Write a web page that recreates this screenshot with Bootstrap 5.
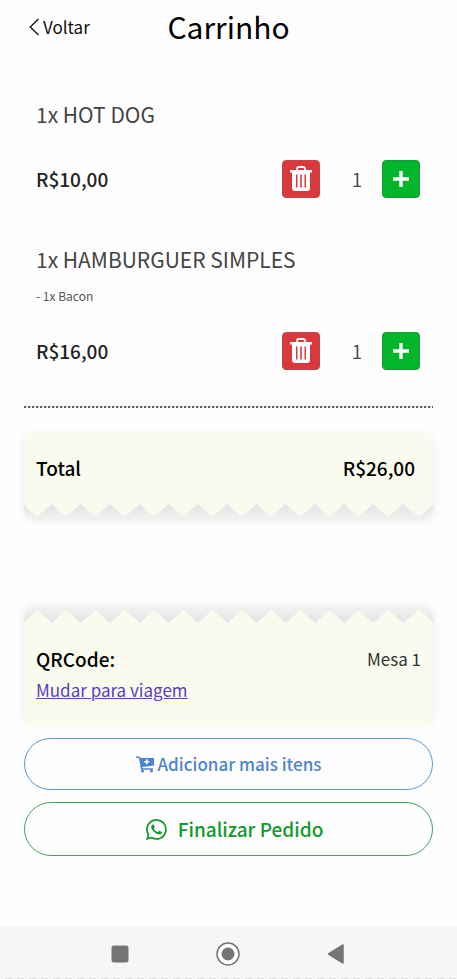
<!DOCTYPE html>
<html lang="pt-BR">
<head>
<meta charset="utf-8">
<meta name="viewport" content="width=device-width, initial-scale=1">
<title>Carrinho</title>
<link href="https://cdn.jsdelivr.net/npm/bootstrap@5.3.0/dist/css/bootstrap.min.css" rel="stylesheet">
<style>
  body { font-family: "Noto Sans CJK SC", "Noto Sans", sans-serif; background: #fefefe; color: #111; }
  svg { display: block; flex: none; }
  .top-bar { display: grid; grid-template-columns: 1fr auto 1fr; padding: 2px 24px 0; height: 56px; align-items: start; }
  .back-link { font-size: 17px; line-height: 50px; color: #111; gap: 3px; padding-left: 4px; }
  .page-title { font-size: 30px; line-height: 48px; font-weight: 400; color: #000; }
  .content { padding: 26px 24px 0; }
  .cart-item { padding: 12px 13px 12px 12px; border-radius: 8px; color: #444; }
  .cart-item + .cart-item { margin-top: 17px; }
  .item-name { font-size: 21px; line-height: 40px; font-weight: 400; color: #444; }
  .item-extra { font-size: 12px; line-height: 20px; margin-top: 7px; color: #555; }
  .item-row { margin-top: 26px; }
  .price { font-size: 19px; font-weight: 500; line-height: 38px; color: #222; }
  .qty-btn { width: 38px; height: 38px; padding: 0; border-radius: 4px; }
  .qty-btn-remove { background: #d9393d; border-color: #c2464a; }
  .qty-btn-add { background: #02b52a; border-color: #1b9a38; }
  .qty { width: 62px; font-size: 19px; line-height: 38px; font-weight: 350; padding-left: 12px; color: #444; }
  .cut-line { height: 2px; margin-top: 24px; background: repeating-linear-gradient(90deg, #5c5c58 0 2px, #d8d8d6 2px 3px, transparent 3px 4px); }
  .ticket { border-radius: 8px; font-size: 19px; line-height: 30px; }
  .ticket-total { margin-top: 24px; box-shadow: 0 3px 8px rgba(0,0,0,.09); }
  .ticket-order { margin-top: 93px; box-shadow: 0 -3px 8px rgba(0,0,0,.09); }
  .ticket-paper { background: #f9fbee; padding: 21px 12px; }
  .ticket-total .ticket-paper { border-radius: 8px 8px 0 0; padding-right: 18px; }
  .ticket-order .ticket-paper { border-radius: 0 0 8px 8px; }
  .teeth { width: 100%; height: 13px; fill: #f9fbee; }
  .teeth-bottom { background: linear-gradient(#e2e2e2, #f0f0f0); border-radius: 0 0 8px 8px; }
  .teeth-top { background: linear-gradient(#f0f0f0, #e2e2e2); border-radius: 8px 8px 0 0; }
  .ticket-label { font-weight: 500; color: #000; }
  .place { font-size: 17px; font-weight: 400; color: #333; }
  .switch-link { font-size: 17px; color: #5a3ec0; }
  .actions { margin-top: 12px; gap: 12px; }
  .action-btn { border-radius: 27px; font-weight: 500; }
  .action-more { height: 52px; color: #4c84cd; border-color: #6296c8; font-size: 17px; gap: 3px; }
  .action-finish { height: 54px; padding-left: 24px; color: #109a2b; border-color: #48a060; font-size: 19px; gap: 11px; }
  .system-bar { height: 53px; background: #f6f6f6; color: #767573; position: relative; gap: 84px; padding: 2px 2px 0 0; }
  .system-bar::after { content: ""; position: absolute; left: 0; right: 0; bottom: 0; height: 1px; background: repeating-linear-gradient(90deg, transparent 0 5px, #ddd 5px 12px); }
  .system-btn { width: 24px; color: inherit; }
</style>
</head>
<body class="min-vh-100 d-flex flex-column">
<header class="top-bar">
  <a href="#" class="back-link d-flex align-items-center text-decoration-none">
    <svg width="12" height="18" viewBox="0 0 12 18" fill="none" stroke="currentColor" stroke-width="1.3"><path d="M10.5 1 2.2 9l8.300 8"/></svg>Voltar</a>
  <h1 class="page-title m-0">Carrinho</h1>
</header>
<main class="content flex-grow-1">
  <article class="cart-item">
    <h2 class="item-name m-0">1x HOT DOG</h2>
    <div class="item-row d-flex align-items-center">
      <span class="price me-auto">R$10,00</span>
      <button type="button" class="btn qty-btn qty-btn-remove d-flex align-items-center justify-content-center" aria-label="Remover HOT DOG">
        <svg width="24" height="26" viewBox="0 0 24 26"><path d="M8 4V3q0-2 2-2h4q2 0 2 2v1" fill="none" stroke="#fff" stroke-width="1.800"/><path fill="#fff" fill-rule="evenodd" d="M1 4h22v2.500h-2V22q0 3-3 3H6q-3 0-3-3V6.500H1zM7 8.500V21.500h1.500V8.500zM11.200 8.500V21.500h1.600V8.500zM15.500 8.500V21.500H17V8.500z"/></svg>
      </button>
      <span class="qty text-center">1</span>
      <button type="button" class="btn qty-btn qty-btn-add d-flex align-items-center justify-content-center" aria-label="Adicionar HOT DOG">
        <svg width="18" height="18" viewBox="0 0 18 18"><path d="M9 1v16M1 9h16" stroke="#fff" stroke-width="3.400"/></svg>
      </button>
    </div>
  </article>
  <article class="cart-item">
    <h2 class="item-name m-0">1x HAMBURGUER SIMPLES</h2>
    <p class="item-extra mb-0">- 1x Bacon</p>
    <div class="item-row d-flex align-items-center">
      <span class="price me-auto">R$16,00</span>
      <button type="button" class="btn qty-btn qty-btn-remove d-flex align-items-center justify-content-center" aria-label="Remover HAMBURGUER SIMPLES">
        <svg width="24" height="26" viewBox="0 0 24 26"><path d="M8 4V3q0-2 2-2h4q2 0 2 2v1" fill="none" stroke="#fff" stroke-width="1.800"/><path fill="#fff" fill-rule="evenodd" d="M1 4h22v2.500h-2V22q0 3-3 3H6q-3 0-3-3V6.500H1zM7 8.500V21.500h1.500V8.500zM11.200 8.500V21.500h1.600V8.500zM15.500 8.500V21.500H17V8.500z"/></svg>
      </button>
      <span class="qty text-center">1</span>
      <button type="button" class="btn qty-btn qty-btn-add d-flex align-items-center justify-content-center" aria-label="Adicionar HAMBURGUER SIMPLES">
        <svg width="18" height="18" viewBox="0 0 18 18"><path d="M9 1v16M1 9h16" stroke="#fff" stroke-width="3.400"/></svg>
      </button>
    </div>
  </article>
  <div class="cut-line"></div>
  <section class="ticket ticket-total">
    <div class="ticket-paper ticket-label d-flex justify-content-between"><span>Total</span><span>R$26,00</span></div>
    <svg class="teeth teeth-bottom" viewBox="0 0 410 13" preserveAspectRatio="none"><path d="M0 0V1L13 13 28 0 42 13 57 0 72 13 86 0 101 13 116 0 130 13 145 0 160 13 174 0 189 13 204 0 218 13 233 0 248 13 262 0 277 13 292 0 306 13 321 0 335 13 350 0 365 13 380 0 396 13 410 1V0z"/></svg>
  </section>
  <section class="ticket ticket-order">
    <svg class="teeth teeth-top" viewBox="0 0 410 13" preserveAspectRatio="none"><path d="M0 13V12L13 0 28 13 42 0 57 13 72 0 86 13 101 0 116 13 130 0 145 13 160 0 174 13 189 0 204 13 218 0 233 13 248 0 262 13 277 0 292 13 306 0 321 13 335 0 350 13 365 0 380 13 396 0 410 12V13z"/></svg>
    <div class="ticket-paper">
      <div class="d-flex justify-content-between"><span class="ticket-label">QRCode:</span><span class="place">Mesa 1</span></div>
      <a href="#" class="switch-link">Mudar para viagem</a>
    </div>
  </section>
  <div class="actions d-grid">
    <button type="button" class="btn action-btn action-more d-flex align-items-center justify-content-center">
      <svg width="19" height="17" viewBox="0 0 19 17" fill="currentColor"><path fill-rule="evenodd" d="M0 .5h3.600L4.500 2H18v7.500L6.500 11v1.300H17v1.500H5L3 2H0zM10 3.300V5H8.200v1.400H10v1.800h1.500V6.400h1.800V5h-1.800V3.300z"/><circle cx="6.500" cy="15" r="1.500"/><circle cx="15.500" cy="15" r="1.500"/></svg>
      Adicionar mais itens</button>
    <button type="button" class="btn action-btn action-finish d-flex align-items-center justify-content-center">
      <svg width="21" height="21" viewBox="0 0 16 16" fill="currentColor"><path d="M13.601 2.326A7.854 7.854 0 0 0 7.994 0C3.627 0 .068 3.558.064 7.926c0 1.399.366 2.760 1.057 3.965L0 16l4.204-1.102a7.933 7.933 0 0 0 3.790.965h.004c4.368 0 7.926-3.558 7.930-7.930A7.898 7.898 0 0 0 13.600 2.326zM7.994 14.521a6.573 6.573 0 0 1-3.356-.920l-.240-.144-2.494.654.666-2.433-.156-.251a6.560 6.560 0 0 1-1.007-3.505c0-3.626 2.957-6.584 6.591-6.584a6.560 6.560 0 0 1 4.660 1.931 6.557 6.557 0 0 1 1.928 4.660c-.004 3.639-2.961 6.592-6.592 6.592zm3.615-4.934c-.197-.099-1.170-.578-1.353-.646-.182-.065-.315-.099-.445.099-.133.197-.513.646-.627.775-.114.133-.232.148-.430.050-.197-.100-.836-.308-1.592-.985-.590-.525-.985-1.175-1.103-1.372-.114-.198-.011-.304.088-.403.087-.088.197-.232.296-.346.100-.114.133-.198.198-.330.065-.134.034-.248-.015-.347-.050-.099-.445-1.076-.612-1.470-.160-.389-.323-.335-.445-.340-.114-.007-.247-.007-.380-.007a.729.729 0 0 0-.529.247c-.182.198-.691.677-.691 1.654 0 .977.710 1.916.810 2.049.098.133 1.394 2.132 3.383 2.992.470.205.840.326 1.129.418.475.152.904.129 1.246.080.380-.058 1.171-.480 1.338-.943.164-.464.164-.860.114-.943-.049-.084-.182-.133-.380-.232z"/></svg>
      Finalizar Pedido</button>
  </div>
</main>
<nav class="system-bar d-flex align-items-center justify-content-center" aria-label="Sistema">
  <button type="button" class="btn system-btn p-0 border-0" aria-label="Recentes"><svg width="24" height="24" viewBox="0 0 24 24"><rect x="3.500" y="3.500" width="17" height="17" rx="2.500" fill="currentColor"/></svg></button>
  <button type="button" class="btn system-btn p-0 border-0" aria-label="Início"><svg width="24" height="24" viewBox="0 0 24 24"><circle cx="12" cy="12" r="11" fill="#fff" stroke="currentColor" stroke-width="1.500"/><circle cx="12" cy="12" r="6.500" fill="currentColor"/></svg></button>
  <button type="button" class="btn system-btn p-0 border-0" aria-label="Voltar"><svg width="24" height="24" viewBox="0 0 24 24"><path d="M4.500 12 19 3v18z" fill="currentColor" stroke="currentColor" stroke-width="1.500" stroke-linejoin="round"/></svg></button>
</nav>
<script src="https://cdn.jsdelivr.net/npm/bootstrap@5.3.0/dist/js/bootstrap.bundle.min.js"></script>
</body>
</html>
